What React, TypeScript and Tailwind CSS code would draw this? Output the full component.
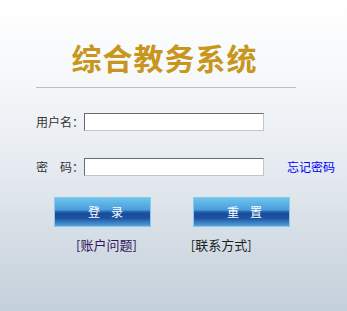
import React from "react";

const cjk = { fontFamily: '"Noto Sans CJK SC", "Noto Sans", sans-serif' };

function Btn({ a, b }: { a: string; b: string }) {
  return (
    <button
      className="w-[97px] h-[30px] border border-[#8cc8ec] flex items-center justify-center gap-[11px] text-white text-[12px] leading-none pl-[6px] bg-[linear-gradient(to_bottom,#6cc4ec_0%,#4a9edb_42%,#2a6cb6_48%,#1a4c9b_55%,#1d53a2_72%,#4fa2dc_100%)]"
      style={cjk}
    >
      <span>{a}</span>
      <span>{b}</span>
    </button>
  );
}

export default function App() {
  return (
    <div
      className="w-[347px] h-[311px] overflow-hidden bg-[linear-gradient(to_bottom,#ffffff_0%,#f6f8fa_25%,#e8edf2_50%,#d8e0e7_72%,#c4d0db_100%)] flex flex-col"
      style={cjk}
    >
      <div className="ml-[36px] w-[260px] flex flex-col">
        <div className="pt-[38px] h-[87px] flex justify-center pr-[3px]">
          <span className="text-[30px] font-bold leading-[38px] text-[#c8961c] tracking-[1px]">
            综合教务系统
          </span>
        </div>
        <div className="h-px bg-[#bdbdbd]" />
      </div>

      <div className="ml-[36px] mt-[25px] flex items-center h-[18px]">
        <span className="w-[48px] text-[12px] text-[#333] leading-none">用户名：</span>
        <div className="w-[180px] h-[18px] bg-white border border-t-[#6a6a6a] border-l-[#6a6a6a] border-b-[#c4c4c4] border-r-[#c4c4c4]" />
      </div>

      <div className="ml-[36px] mt-[27px] flex items-center h-[18px]">
        <span className="w-[48px] text-[12px] text-[#333] leading-none whitespace-pre">密　码：</span>
        <div className="w-[180px] h-[18px] bg-white border border-t-[#6a6a6a] border-l-[#6a6a6a] border-b-[#c4c4c4] border-r-[#c4c4c4]" />
        <span className="ml-[23px] text-[12px] text-[#0000ff] leading-none">忘记密码</span>
      </div>

      <div className="ml-[54px] mt-[21px] flex gap-[42px]">
        <Btn a="登" b="录" />
        <Btn a="重" b="置" />
      </div>

      <div className="mt-[10px] flex text-[13px] leading-[16px]">
        <span className="ml-[76px] text-[#33145e]">[账户问题]</span>
        <span className="ml-[54px] text-[#1e1e1e]">[联系方式]</span>
      </div>
    </div>
  );
}
